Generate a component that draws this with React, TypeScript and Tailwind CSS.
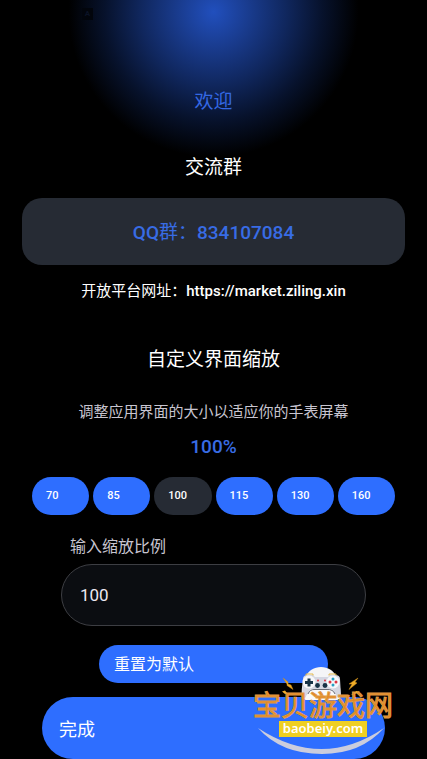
import React, { useState } from "react";
import clsx from "clsx";

const SCALES = [70, 85, 100, 115, 130, 160];

function ScaleButton({ value, active, onClick }: { value: number; active: boolean; onClick: () => void }) {
	return (
		<button
			type="button"
			aria-pressed={active}
			onClick={onClick}
			className={clsx(
				"h-[38px] rounded-full pt-px pl-[14px] text-left text-[11px] font-medium text-white",
				active ? "bg-[#262b34]" : "bg-[#2e6eff]"
			)}
		>
			{value}
		</button>
	);
}

function Gamepad() {
	return (
		<svg viewBox="0 0 140 92" className="absolute inset-0 h-full w-full" aria-hidden="true">
			<path d="M5 61 Q69 103 131 61 Q108 87 69 87 Q28 87 5 61Z" fill="#cbcddd" />
			<path d="M49 32 C47 14 54 0 68 0 C82 0 89 14 87 32Z" fill="#f5f5f7" />
			<path d="M50 12 Q50 8 55 8 H60 L62 10 H75 L77 8 H82 Q87 8 87 12 L88 29 Q86 33 83 28 L79 22 H58 L54 29 Q50 34 49 28Z" fill="#d5d7e2" />
			<path d="M53 8.500 V7 H60 V8.500 M76 8.500 V7 H83 V8.500" fill="none" stroke="#e3b94c" strokeWidth="1" />
			<circle cx="56" cy="15" r="6.500" fill="#f7f7fa" />
			<circle cx="80" cy="15" r="6.500" fill="#f7f7fa" />
			<path d="M54.500 11.500h3v2.500h2.500v3h-2.500v2.500h-3V17h-2.500v-3h2.500Z" fill="#173246" />
			<circle cx="80" cy="12" r="1.500" fill="#269fc1" />
			<circle cx="80" cy="18" r="1.500" fill="#269fc1" />
			<circle cx="77" cy="15" r="1.500" fill="#dc3544" />
			<circle cx="83" cy="15" r="1.500" fill="#dc3544" />
			<circle cx="65" cy="13.500" r="1" fill="#dc3544" />
			<circle cx="72" cy="13.500" r="1" fill="#dc3544" />
			<circle cx="64.500" cy="18.500" r="2.400" fill="#173246" />
			<circle cx="72" cy="18.500" r="2.400" fill="#173246" />
			<path d="M52 33 Q54 23 62 22.500 H74 Q82 23 85 33Z" fill="#fafafa" />
			<path d="M55 27 Q57 22 62 22.500 H74 Q80 22 82 27" fill="none" stroke="#6b6d78" strokeWidth="1" />
			<path d="M30 11 L35 15 L35 17 L38 18 L40 22.500 L34 18.500 L34 17Z M105 11 L96 17 L99 17 L96 22.500 L104 16 L102 15Z" fill="#f1ae28" stroke="#c98a1b" strokeWidth="0.500" />
			<path d="M29 24.500 L32 23.500 L34 26 L37 26 L32 27Z M107 24.500 L103 24 L98 28 L102 27Z" fill="#f1ae28" />
		</svg>
	);
}

function SiteBadge() {
	return (
		<div className="pointer-events-none absolute right-[34px] bottom-0 h-[92px] w-[140px]">
			<Gamepad />
			<div className="relative flex flex-col items-center pt-[26px]">
				<span className="text-[28px] leading-[28px] whitespace-nowrap text-[#e5871c] [-webkit-text-stroke:1px_#e09a45]">
					宝贝游戏网
				</span>
				<span className="h-4 bg-[#efcf22] px-1 font-['Noto_Sans',sans-serif] text-[13px] leading-[15px] font-semibold text-white">
					baobeiy.com
				</span>
			</div>
		</div>
	);
}

export default function App() {
	const [scale, setScale] = useState("100");

	return (
		<main className="relative flex min-h-screen flex-col bg-black bg-[radial-gradient(circle_145px_at_50%_12px,#214fbd,#193b8d_25%,#10275e_50%,#07122c_75%,#000)] pt-[88px] font-[Roboto,'Noto_Sans_CJK_SC',sans-serif] text-white">
			<span className="absolute top-2 left-[82px] flex h-3 w-[11px] items-center justify-center bg-[#02050c] text-[8px] font-bold text-[#0a1225]">
				A
			</span>

			<h1 className="text-center text-[19px] leading-7 text-[#3468e3]">欢迎</h1>

			<section className="mt-[38px] flex flex-col text-center">
				<h2 className="text-[19px] leading-7">交流群</h2>
				<div className="mx-[22px] mt-4 flex h-[67px] items-center justify-center rounded-[20px] bg-[#262b34] pt-1 text-[19px] font-medium text-[#386ce5]">
					<p>
						QQ<span className="font-normal">群：</span>834107084
					</p>
				</div>
				<p className="mt-[15px] text-[15px] leading-[22px]">
					开放平台网址：
					<a href="https://market.ziling.xin" className="font-medium">
						https://market.ziling.xin
					</a>
				</p>
			</section>

			<section className="mt-11 flex flex-col">
				<h2 className="text-center text-[19px] leading-7">自定义界面缩放</h2>
				<p className="mt-[27px] text-center text-[15px] leading-[22px] text-[#c8c5d0]">调整应用界面的大小以适应你的手表屏幕</p>
				<p className="mt-[10px] text-center text-[19px] leading-7 font-medium text-[#386ce5]">{scale}%</p>

				<div className="mx-8 mt-4 grid grid-cols-6 gap-1">
					{SCALES.map((value) => (
						<ScaleButton
							key={value}
							value={value}
							active={scale === String(value)}
							onClick={() => setScale(String(value))}
						/>
					))}
				</div>

				<label htmlFor="scale" className="mt-5 ml-[70px] text-[16px] leading-6 text-[#c8c5d0]">
					输入缩放比例
				</label>
				<div className="mx-[61px] mt-[5px] flex">
					<input
						id="scale"
						inputMode="numeric"
						value={scale}
						onChange={(e) => setScale(e.target.value)}
						className="h-[62px] w-full min-w-0 rounded-full border border-[#3d3e43] bg-[#0b0d11] px-[18px] text-[17px] text-[#ece8f2] outline-none"
					/>
				</div>
				<button
					type="button"
					onClick={() => setScale("100")}
					className="mx-[99px] mt-[19px] h-[38px] rounded-full bg-[#2e6eff] pt-0.5 pl-[15px] text-left text-[16px]"
				>
					重置为默认
				</button>
			</section>

			<button type="button" className="mx-[42px] mt-[14px] h-[62px] rounded-full bg-[#2e6eff] pt-0.5 pl-[17px] text-left text-[18px]">
				完成
			</button>

			<SiteBadge />
		</main>
	);
}
